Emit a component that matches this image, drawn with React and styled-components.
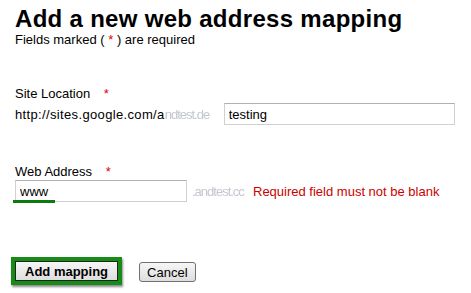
import styled, { createGlobalStyle } from "styled-components"

const Global = createGlobalStyle`
  body {
    margin: 0;
    background: #fff;
    font-family: Arial, "Liberation Sans", sans-serif;
    color: #000;
  }
`

export default function App() {
  return (
    <Page>
      <Global />
      <Title>Add a new web address mapping</Title>
      <Note>Fields marked ( <Star>*</Star> ) are required</Note>

      <Field $top={40}>
        <Label>Site Location <Star $gap={10}>*</Star></Label>
        <Row $top={1}>
          <Prefix>http://sites.google.com/a</Prefix>
          <Blur $width={55}>ndtest.de</Blur>
          <Input $width={231} defaultValue="testing" />
        </Row>
      </Field>

      <Field $top={39}>
        <Label>Web Address <Star $gap={10}>*</Star></Label>
        <Row $top={0}>
          <Underlined>
            <Input $width={172} defaultValue="www" />
            <Mark />
          </Underlined>
          <Blur $width={57} $gap={5}>.andtest.cc</Blur>
          <Error>Required field must not be blank</Error>
        </Row>
      </Field>

      <Buttons>
        <Highlight>
          <Button $bold>Add mapping</Button>
        </Highlight>
        <Button>Cancel</Button>
      </Buttons>
    </Page>
  )
}

const Page = styled.div`
  padding: 5px 0 0 15px;
  width: 471px;
  height: 293px;
  box-sizing: border-box;
  overflow: hidden;
`
const Title = styled.h1`
  margin: 0;
  font-size: 24px;
  font-weight: bold;
  line-height: 28px;
  letter-spacing: 0.3px;
  white-space: nowrap;
`
const Note = styled.div`
  font-size: 13px;
  line-height: 13px;
`
const Star = styled.span`
  color: #dd0000;
  margin-left: ${(p) => p.$gap || 0}px;
`
const Field = styled.div`
  margin-top: ${(p) => p.$top}px;
`
const Label = styled.div`
  font-size: 13px;
  line-height: 16px;
`
const Row = styled.div`
  display: flex;
  align-items: center;
  font-size: 13px;
  white-space: nowrap;
  margin-top: ${(p) => p.$top}px;
`
const Prefix = styled.span`
  letter-spacing: 0.35px;
`
const Blur = styled.span`
  display: inline-block;
  width: ${(p) => p.$width}px;
  margin-left: ${(p) => p.$gap || 0}px;
  margin-right: 4px;
  color: #c3c7ce;
  letter-spacing: -1px;
  filter: blur(0.5px);
`
const Input = styled.input`
  width: ${(p) => p.$width}px;
  height: 22px;
  box-sizing: border-box;
  border: 1px solid #d0d0d0;
  border-top-color: #b0b0b0;
  padding: 1px 4px 0;
  font: 13px Arial, "Liberation Sans", sans-serif;
  color: #000;
  outline: none;
`
const Underlined = styled.span`
  position: relative;
  display: inline-flex;
`
const Mark = styled.span`
  position: absolute;
  left: -2px;
  bottom: -1px;
  width: 42px;
  height: 3px;
  background: #0c7a0c;
`
const Error = styled.span`
  color: #cc0000;
`
const Buttons = styled.div`
  display: flex;
  align-items: center;
  gap: 17px;
  margin-top: 55px;
  margin-left: -4px;
`
const Highlight = styled.div`
  border: 4px solid #168c16;
  box-shadow: 1px 2px 2px rgba(0, 0, 0, 0.45);
  display: flex;
`
const Button = styled.button`
  height: 20px;
  padding: 0 ${(p) => (p.$bold ? 9 : 7)}px;
  margin-top: ${(p) => (p.$bold ? 0 : 2)}px;
  font: ${(p) => (p.$bold ? "bold" : "normal")} 13px Arial, "Liberation Sans", sans-serif;
  color: #000;
  border: 1px solid ${(p) => (p.$bold ? "#222" : "#707070")};
  border-radius: ${(p) => (p.$bold ? 0 : 3)}px;
  background: linear-gradient(#f6f6f6, #dedede);
`
